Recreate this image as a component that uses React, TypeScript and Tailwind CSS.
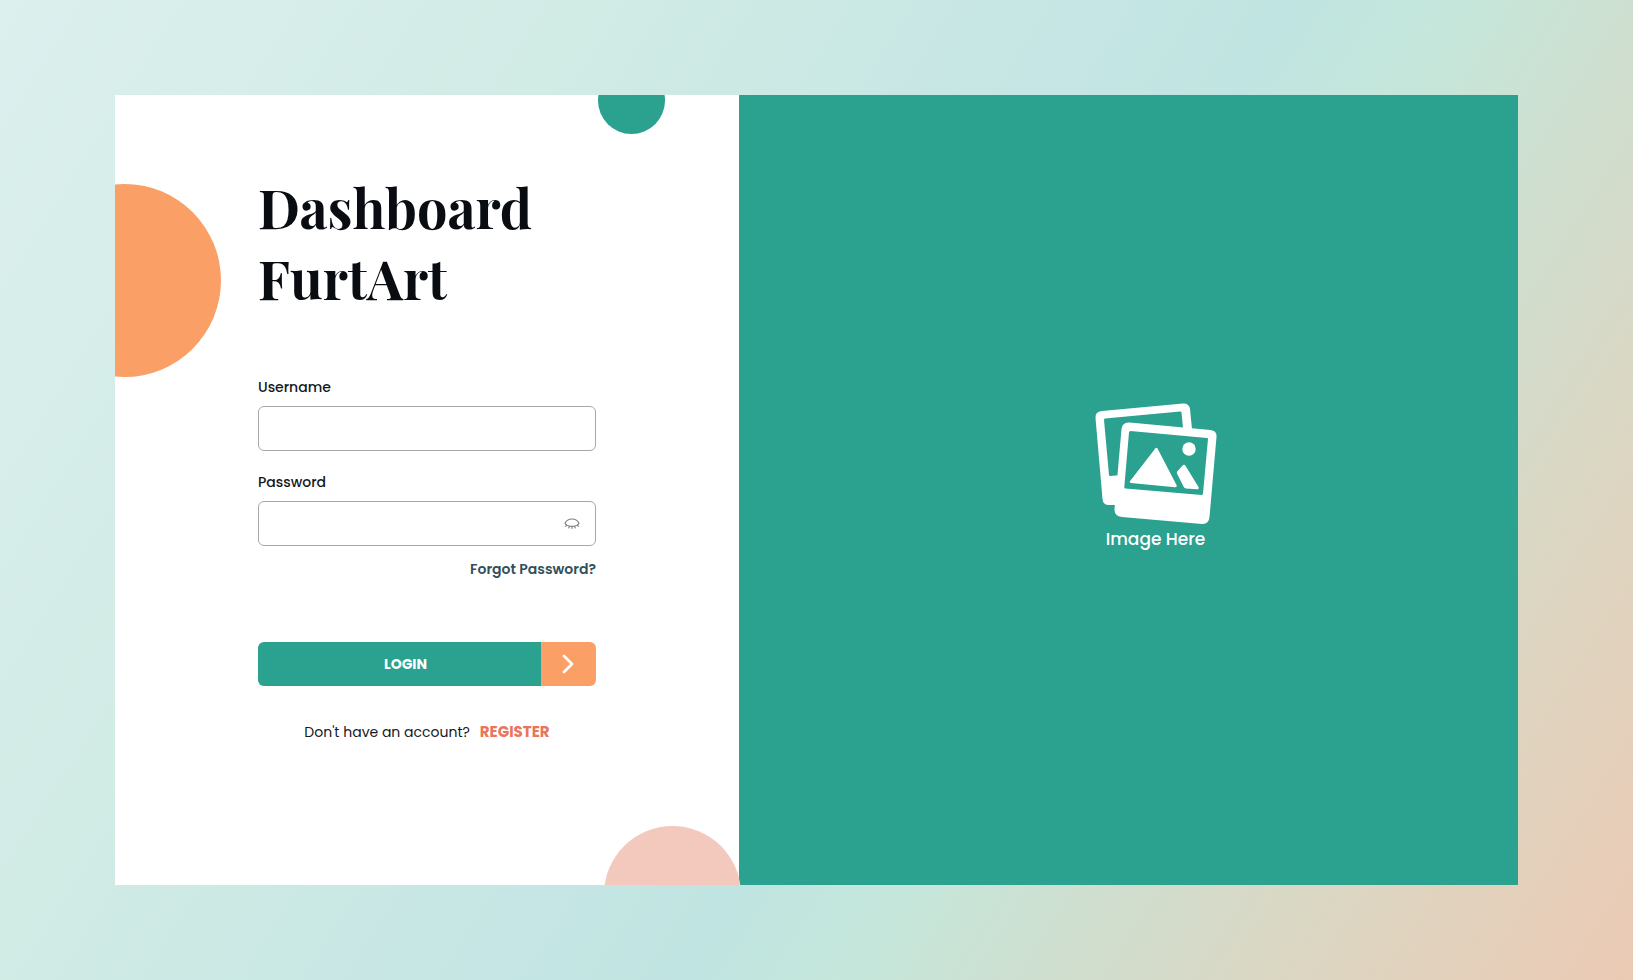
import { useState } from "react";

function PicturesIcon() {
  return (
    <svg viewBox="0 0 122 122" className="h-[122px] w-[122px]" fill="#fff" aria-hidden="true">
      <path
        fillRule="evenodd"
        d="M7 8 L88 .5 Q94 0 95 6 L97 26 L88 25 L86.500 9.500 Q86.400 8.500 85 8.500 L10 15.500 Q9 15.600 9 17 L14 72 Q14 73 15 73 L24 72.300 L22 102 L15 102 Q8 102.500 7.500 96 L.5 15 Q0 8.500 7 8 Z"
      />
      <path
        fillRule="evenodd"
        d="M34.500 19.500 L115.500 27 Q122 27.700 121.500 34 L114.500 114 Q113.800 121.500 107 121 L27 114 Q19 113 19.500 106 L26.500 26 Q27.300 19 34.500 19.500 Z M35.500 28 Q34 28 34 29.500 L29.300 84 Q29.200 85.500 30.500 85.600 L106.500 92 Q108 92 108 90.600 L113 36 Q113 35 112 35 Z"
      />
      <path d="M60.500 45.300 Q61.500 44.300 62.500 45.600 L81.500 82 Q82.300 84.300 80 84.200 L36 80 Q34 79.500 35.300 77.800 Z" />
      <path d="M88 62 Q89.600 61 90.600 63 L103.500 84 Q104.300 86.300 102 86.200 L91 85.400 Q89.500 85.200 88.800 84 L82 70.500 Q81.500 69.400 82.200 68.500 Z" />
      <circle cx="94" cy="46" r="6.700" />
    </svg>
  );
}

function LashesIcon() {
  return (
    <svg viewBox="0 0 16 12" className="h-3 w-4" fill="none" stroke="#808080" strokeLinecap="round" aria-hidden="true">
      <path d="M1 5.500 C3.500 -.5 12.500 -.5 15 5.500 C12 9.400 4 9.400 1 5.500 Z" strokeWidth="1.200" />
      <path d="M2.500 7 L1.700 8.500 M5.300 8.200 L4.800 10 M8 8.500 V10.500 M10.700 8.200 L11.200 10 M13.500 7 L14.300 8.500" strokeWidth="1.100" />
    </svg>
  );
}

const fieldClass =
  "h-[45px] w-full rounded-md border border-[#a8a8a8] bg-white px-3 text-sm text-[#15191c] outline-none focus:border-[#2ba190]";
const labelClass = "text-sm leading-5 font-medium text-[#15191c]";

export default function App() {
  const [visible, setVisible] = useState(false);

  return (
    <main className="flex min-h-screen bg-[linear-gradient(122deg,#dcf0ee_0%,#d1ebe5_27%,#c5e6e4_49%,#c0e4e1_58%,#c5e7db_65%,#cedfd0_73%,#dcd6c2_85%,#eccab4_100%)] px-[7.04vw] py-[95px] font-['Poppins','Inter','Noto_Sans',sans-serif]">
      <div className="flex flex-1 overflow-hidden bg-white">
        <section className="relative z-10 flex flex-[624_1_0%] justify-center bg-white">
          <div className="absolute inset-0 overflow-hidden">
            <div className="absolute top-[89px] -left-[87px] size-[193px] rounded-full bg-[#fa9f66]" />
            <div className="absolute -top-[28px] right-[74px] size-[67px] rounded-full bg-[#2ba190]" />
          </div>
          <div className="absolute -right-[2px] -bottom-[78px] size-[137px] rounded-full bg-[#f3c9bd]" />

          <form className="relative flex w-[338px] flex-col pt-[77px]" onSubmit={(event) => event.preventDefault()}>
            <h1 className="font-['Playfair_Display','Liberation_Serif',serif] text-[54px] leading-[71px] font-bold text-[#090d12]">
              Dashboard
              <br />
              FurtArt
            </h1>

            <div className="mt-[63px] flex flex-col gap-[9px]">
              <label htmlFor="username" className={labelClass}>
                Username
              </label>
              <input id="username" type="text" autoComplete="username" className={fieldClass} />
            </div>

            <div className="mt-[21px] flex flex-col gap-[9px]">
              <label htmlFor="password" className={labelClass}>
                Password
              </label>
              <div className="relative">
                <input
                  id="password"
                  type={visible ? "text" : "password"}
                  autoComplete="current-password"
                  className={fieldClass}
                />
                <button
                  type="button"
                  aria-label="Show password"
                  aria-pressed={visible}
                  onClick={() => setVisible(!visible)}
                  className="absolute inset-y-0 right-4 flex items-center"
                >
                  <LashesIcon />
                </button>
              </div>
            </div>

            <a href="#forgot" className="mt-[13px] self-end text-sm leading-5 font-semibold text-[#31505b]">
              Forgot Password?
            </a>

            <button type="submit" className="mt-[63px] flex h-11 overflow-hidden rounded-md">
              <span className="flex h-full flex-1 items-center justify-center bg-[#2ba190] pl-3 text-sm font-bold text-white">
                LOGIN
              </span>
              <span className="flex h-full w-[55px] items-center justify-center bg-[#fa9f66]">
                <svg viewBox="0 0 12 20" className="h-5 w-3" fill="none" stroke="#fff" strokeWidth="2.600" strokeLinecap="round" strokeLinejoin="round" aria-hidden="true">
                  <path d="M2 2 L10 10 L2 18" />
                </svg>
              </span>
            </button>

            <p className="mt-9 flex justify-center gap-[10px] text-sm leading-5 text-[#15191c]">
              Don't have an account?
              <a href="#register" className="text-[15px] font-bold text-[#ea745c]">
                REGISTER
              </a>
            </p>
          </form>
        </section>

        <section className="flex flex-[779_1_0%] flex-col bg-[#2ba190]">
          <div className="flex flex-1 flex-col items-center justify-center pb-[26px] pl-[54px]">
            <PicturesIcon />
            <p className="mt-[2px] text-[17px] leading-6 font-medium text-white">Image Here</p>
          </div>
        </section>
      </div>
    </main>
  );
}
